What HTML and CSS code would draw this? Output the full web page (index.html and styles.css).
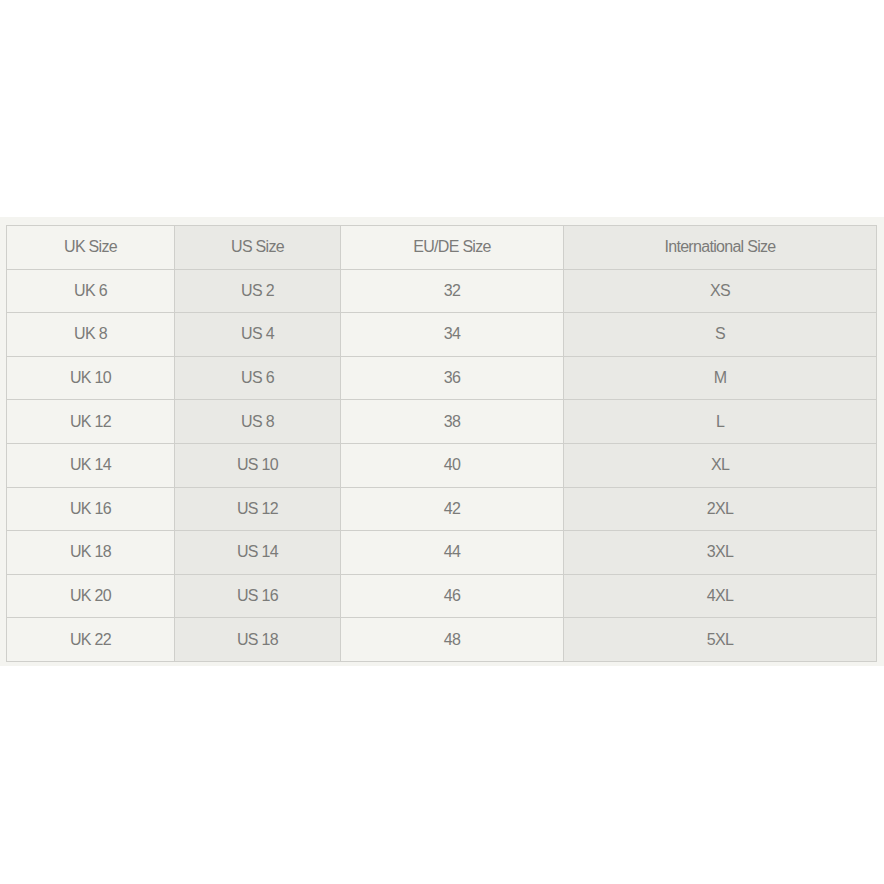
FILE: index.html
```html
<!DOCTYPE html>
<html>
<head>
<meta charset="utf-8">
<link rel="stylesheet" href="styles.css">
</head>
<body>
<div class="panel">
  <table class="sizes">
    <colgroup>
      <col class="c1"><col class="c2"><col class="c3"><col class="c4">
    </colgroup>
    <thead>
      <tr><th>UK Size</th><th class="dark">US Size</th><th>EU/DE Size</th><th class="dark">International Size</th></tr>
    </thead>
    <tbody>
      <tr><td>UK 6</td><td class="dark">US 2</td><td>32</td><td class="dark">XS</td></tr>
      <tr><td>UK 8</td><td class="dark">US 4</td><td>34</td><td class="dark">S</td></tr>
      <tr><td>UK 10</td><td class="dark">US 6</td><td>36</td><td class="dark">M</td></tr>
      <tr><td>UK 12</td><td class="dark">US 8</td><td>38</td><td class="dark">L</td></tr>
      <tr><td>UK 14</td><td class="dark">US 10</td><td>40</td><td class="dark">XL</td></tr>
      <tr><td>UK 16</td><td class="dark">US 12</td><td>42</td><td class="dark">2XL</td></tr>
      <tr><td>UK 18</td><td class="dark">US 14</td><td>44</td><td class="dark">3XL</td></tr>
      <tr><td>UK 20</td><td class="dark">US 16</td><td>46</td><td class="dark">4XL</td></tr>
      <tr><td>UK 22</td><td class="dark">US 18</td><td>48</td><td class="dark">5XL</td></tr>
    </tbody>
  </table>
</div>
</body>
</html>
```
FILE: styles.css
```css
html, body {
  margin: 0;
  padding: 0;
  background: #ffffff;
}
body {
  width: 884px;
  height: 884px;
  font-family: "Liberation Sans", Arial, sans-serif;
}
.panel {
  margin-top: 217px;
  background: #f4f4f0;
  padding: 8px 8px 5px 6px;
  height: 436px;
}
.sizes {
  border-collapse: collapse;
  table-layout: fixed;
  width: 870px;
  height: 436px;
}
.c1 { width: 168px; }
.c2 { width: 166px; }
.c3 { width: 223px; }
.c4 { width: 313px; }
.sizes th, .sizes td {
  border: 1px solid #cfcfcb;
  text-align: center;
  vertical-align: middle;
  font-size: 16px;
  font-weight: normal;
  color: #7b7b79;
  letter-spacing: -0.7px;
  padding: 0;
  background: #f4f4f0;
  height: 42.6px;
}
.sizes .dark {
  background: #e9e9e5;
}
```
